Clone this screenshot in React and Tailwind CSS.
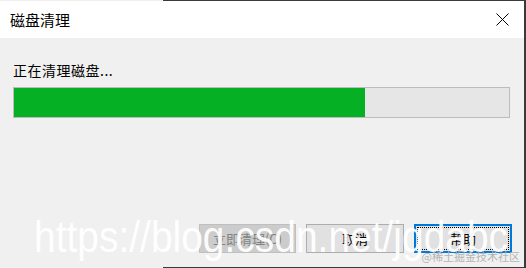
export default function App() {
  const cjk = { fontFamily: '"Microsoft YaHei", "Noto Sans CJK SC", "Noto Sans", sans-serif' };
  return (
    <div className="relative w-[526px] h-[268px] bg-[#f0f0f0] overflow-hidden" style={cjk}>
      {/* window edges */}
      <div className="absolute left-[163px] right-0 top-0 h-px bg-[#3a3a3a]" />
      <div className="absolute left-[163px] right-0 bottom-0 h-px bg-[#3a3a3a]" />
      <div className="absolute right-0 top-0 bottom-0 w-[2px] bg-[#3a3a3a]" />

      <div className="flex flex-col h-full">
        {/* title bar */}
        <div className="h-[37px] bg-white flex items-center justify-between pl-[10px] pr-[15px] mt-px mr-[2px]">
          <span className="text-[15px] text-black leading-none">磁盘清理</span>
          <svg width="13" height="13" viewBox="0 0 13 13" className="text-black">
            <path d="M0.5 0.5 L12.5 12.5 M12.5 0.5 L0.5 12.5" stroke="currentColor" strokeWidth="1" fill="none" />
          </svg>
        </div>

        {/* body */}
        <div className="flex-1 flex flex-col pl-[13px] pr-[14px]">
          <div className="mt-[25px] text-[14px] leading-none text-black tracking-[0.5px]">正在清理磁盘...</div>
          <div className="mt-[10px] mr-[2px] h-[31px] border border-[#bcbcbc] bg-[#e6e6e6] flex">
            <div className="h-full bg-[#06b025]" style={{ width: 351 }} />
          </div>

          <div className="mt-[106px] flex justify-end gap-[10px]">
            <button className="w-[97px] h-[29px] bg-[#cccccc] border border-[#bfbfbf] text-[13px] text-[#838383] flex items-center justify-center">
              立即清理(C)
            </button>
            <button className="w-[98px] h-[29px] bg-[#e1e1e1] border border-[#adadad] text-[13px] text-black flex items-center justify-center">
              取消
            </button>
            <button className="w-[98px] h-[29px] bg-[#e1e1e1] border-2 border-[#0078d7] p-[1px] flex">
              <span className="flex-1 border border-dotted border-black flex items-center justify-center text-[13px] text-black">
                帮助
              </span>
            </button>
          </div>
        </div>
      </div>

      {/* watermarks */}
      <div
        className="absolute left-[34px] top-[215px] text-[44px] leading-none text-white/95 whitespace-nowrap origin-left scale-x-[0.885]"
        style={{ fontFamily: '"Liberation Sans", Arial, sans-serif' }}
      >
        https://blog.csdn.net/jgdabc
      </div>
      <div className="absolute right-[6px] top-[251px] text-[11px] leading-none text-[#b4b4b4] whitespace-nowrap">
        @稀土掘金技术社区
      </div>
    </div>
  );
}
